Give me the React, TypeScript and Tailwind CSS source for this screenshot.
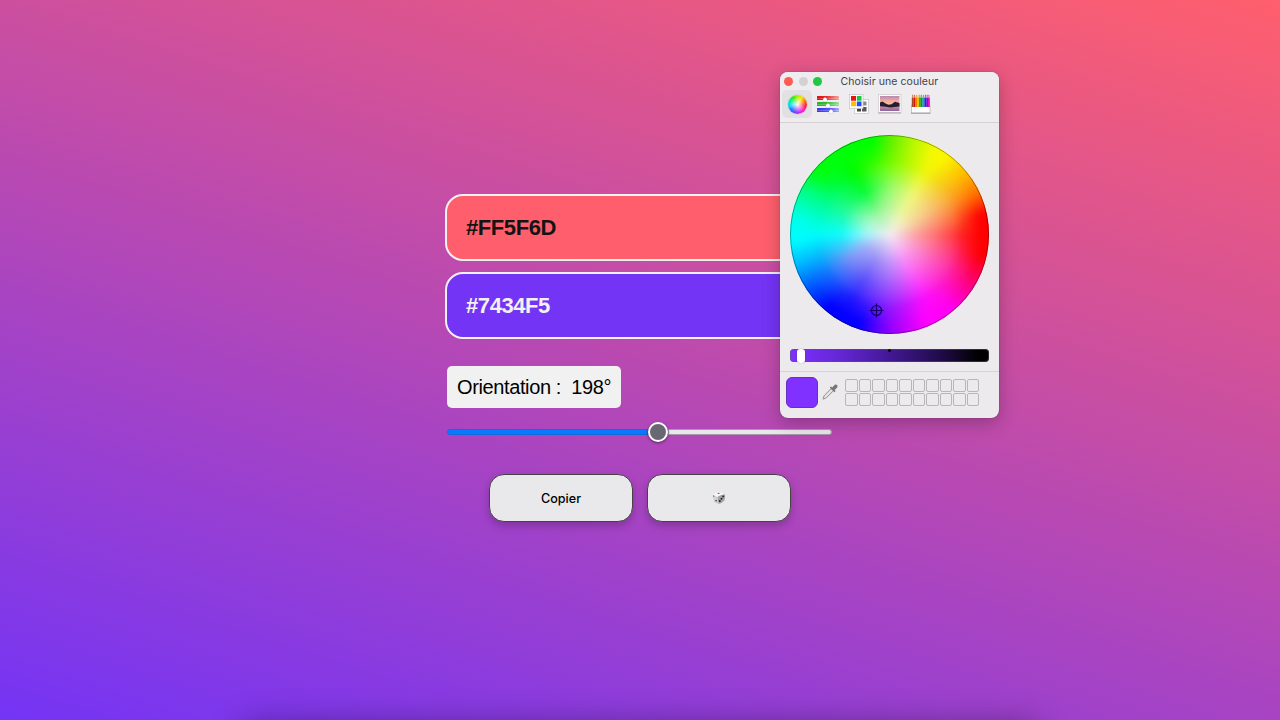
import React from "react";

type Ring = { colors: string[]; from: number; to: number };

// Hue samples clockwise from the top, one every 30 degrees, for each ring of the wheel.
const rings: Ring[] = [
  { from: 0, to: 25, colors: ["#bcf6a0", "#eef79c", "#f4dca0", "#fda4a4", "#fb9cd8", "#f898fa", "#c69afa", "#a098f7", "#a2acf8", "#94fafb", "#a0f9c4", "#90f798"] },
  { from: 25, to: 48, colors: ["#90fa68", "#f0f870", "#f8c074", "#fe6c6c", "#fd60bc", "#fb58fb", "#a460fc", "#6458fa", "#7894f8", "#10fcfc", "#28fb94", "#08fb38"] },
  { from: 48, to: 72, colors: ["#74fb00", "#f0f60c", "#fba830", "#ff2828", "#fe28a8", "#fe10fd", "#9020fe", "#2a20fd", "#1480fc", "#00fdfb", "#00fc80", "#00fb00"] },
];

const wheelEdge =
  "conic-gradient(#5cf000 0deg,#b8f800 15deg,#f4f800 27deg,#faf600 36deg,#ffb800 52deg,#ff7000 65deg,#ff0000 78deg,#ff0000 102deg,#ff0080 122deg,#ff00f0 140deg,#ff00ff 158deg,#9000ff 180deg,#0800ff 198deg,#0000ff 220deg,#0060ff 238deg,#00b8ff 252deg,#00fcff 266deg,#00ffe8 280deg,#00ff88 297deg,#00ff10 310deg,#00ff00 350deg,#5cf000 360deg)";

function ringStyle({ colors, from, to }: Ring): React.CSSProperties {
  const mask = `radial-gradient(circle closest-side, transparent ${from}%, #000 ${to}%)`;
  return {
    background: `conic-gradient(${[...colors, colors[0]].join(",")})`,
    maskImage: mask,
    WebkitMaskImage: mask,
  };
}

function ColorWheel() {
  const edgeMask = "radial-gradient(circle closest-side, transparent 68%, #000 92%)";
  return (
    <div className="relative ml-[10px] mt-[12px] size-[199px] overflow-hidden rounded-full" style={{ background: wheelEdge }}>
      <div className="absolute inset-0 bg-[#f3eef3] blur-[3px]">
        {rings.map((r) => (
          <div key={r.to} className="absolute inset-0" style={ringStyle(r)} />
        ))}
        <div className="absolute inset-0" style={{ background: wheelEdge, maskImage: edgeMask, WebkitMaskImage: edgeMask }} />
      </div>
      <div className="absolute inset-0 rounded-full border border-black/35" />
      <svg className="absolute left-[79px] top-[168px]" width="15" height="15" viewBox="0 0 15 15" fill="none" stroke="#16006b" strokeWidth="1.2">
        <circle cx="7.5" cy="7.5" r="5" />
        <path d="M7.5 .5v14M.5 7.5h14" />
      </svg>
    </div>
  );
}

function WheelIcon() {
  return (
    <div className="flex h-7 w-[30px] items-center justify-center rounded-[5px] bg-[#e3e0e4]">
      <div className="size-[19px] rounded-full bg-[radial-gradient(circle_closest-side,white_0%,transparent_85%),conic-gradient(#a8f000,#ffe000,#ff7000,#ff2040,#ff20b0,#e020ff,#7040ff,#2070ff,#00d8ff,#00f0a0,#20f000,#a8f000)] ring-1 ring-black/5" />
    </div>
  );
}

function SlidersIcon() {
  return (
    <svg width="22" height="20" viewBox="0 0 22 20">
      <defs>
        <linearGradient id="sr"><stop stopColor="#e00808" /><stop offset=".45" stopColor="#e83030" /><stop offset="1" stopColor="#f4a0a0" /></linearGradient>
        <linearGradient id="sg"><stop stopColor="#28b028" /><stop offset=".5" stopColor="#3dbf3d" /><stop offset="1" stopColor="#a0dca0" /></linearGradient>
        <linearGradient id="sb"><stop stopColor="#3434f0" /><stop offset=".6" stopColor="#5858f8" /><stop offset="1" stopColor="#a8acf8" /></linearGradient>
      </defs>
      <g transform="translate(0 2)">
        <rect y="0" width="22" height="4" rx=".6" fill="url(#sr)" />
        <rect y="6" width="22" height="4" rx=".6" fill="url(#sg)" />
        <rect y="12" width="22" height="4" rx=".6" fill="url(#sb)" />
        <path d="M0 2.5h22M0 8.5h22M0 14.5h22" stroke="#fff" strokeOpacity=".2" strokeWidth="1" />
        <g fill="#fff" stroke="#aaa" strokeWidth=".3">
          <path d="M8 1.2 10 3V5.4H6V3Z" />
          <path d="M11 7.2 13 9v2.4H9V9Z" />
          <path d="M14 13.2 16 15v2.4h-4V15Z" />
        </g>
      </g>
    </svg>
  );
}

function PalettesIcon() {
  return (
    <svg width="20" height="20" viewBox="0 0 20 20">
      <rect x="5.5" y="5.5" width="14" height="14" fill="#fff" stroke="#c6c3c6" strokeWidth=".7" />
      <path fill="#444" d="M8 13h4v4.5H8z" />
      <path fill="#888" d="M13.5 7.5h4v4h-4z" />
      <path fill="#555" d="M13 13h4.5v4.5H13z" />
      <rect x=".5" y=".5" width="13.5" height="14" fill="#fff" stroke="#c6c3c6" strokeWidth=".7" />
      <path fill="#f01010" d="M2 2h5v4.8H2z" />
      <path fill="#18c83c" d="M7.8 2h4.7v4.8H7.8z" />
      <path fill="#ffc000" d="M2 7.6h5v4.7H2z" />
      <path fill="#2848ff" d="M7.8 7.6h4.7v4.7H7.8z" />
    </svg>
  );
}

function ImageIcon() {
  return (
    <svg width="24" height="20" viewBox="0 0 24 20">
      <defs>
        <linearGradient id="sky" x2="0" y2="1"><stop stopColor="#b58ab0" /><stop offset=".5" stopColor="#f0a8a0" /><stop offset="1" stopColor="#ffc778" /></linearGradient>
        <linearGradient id="sea" x2="0" y2="1"><stop stopColor="#e59b94" /><stop offset="1" stopColor="#8a62a2" /></linearGradient>
      </defs>
      <rect x=".5" y=".5" width="22.5" height="18" fill="#fff" stroke="#ccc8cc" strokeWidth=".7" />
      <path d="M0 19h23" stroke="#aaa6aa" strokeWidth="1" />
      <rect x="2" y="2" width="19.5" height="9" fill="url(#sky)" />
      <rect x="2" y="11" width="19.5" height="6" fill="url(#sea)" />
      <path fill="#241d38" d="M2 8.5 4.5 7.5l3 2 3 1.2 3-.5 3.5-2.4 4.5 1.2v3.5l-5 .5-4 .4-5-.7-5.5-.5z" />
    </svg>
  );
}

const pencils = ["#a04a20", "#e01010", "#f08000", "#d8c800", "#38a818", "#109048", "#10a0c8", "#1030e0", "#7018e0", "#e010c0"];

function PencilsIcon() {
  return (
    <svg width="20" height="20" viewBox="0 0 20 20">
      <rect x=".5" y="11" width="18.5" height="8" fill="#fff" stroke="#b5b2b5" strokeWidth=".7" />
      {pencils.map((c, i) => (
        <g key={c} transform={`translate(${0.8 + i * 1.8} 0)`}>
          <path d="M0 4 .9 1 1.8 4z" fill="#e0bc90" />
          <path d="M.3 2.4 .9.2 1.5 2.4z" fill={c} />
          <rect y="3.6" width="1.85" height="9.4" fill={c} />
        </g>
      ))}
      <path d="M0 19.2h19.5" stroke="#969396" strokeWidth=".9" />
    </svg>
  );
}

function Eyedropper() {
  return (
    <svg width="16" height="16" viewBox="0 0 16 16">
      <path d="M9.2 4.6 2.4 11.4 .9 14.8l.4.4 3.3-1.6 6.8-6.8z" fill="#e4e3e4" stroke="#85838a" strokeWidth=".9" />
      <path d="M7.8 3.5 9 2.4l1.2 1.1L12.1 1.4C13 .4 14.2.3 15 1.1s.7 2-.3 2.9l-2.1 1.9 1.1 1.2-1.2 1.2z" fill="#77757a" />
    </svg>
  );
}

function Dice() {
  return (
    <svg width="14" height="14" viewBox="0 0 14 14">
      <path d="M.9 4 5.6 5.8 6.4 12.8 2.4 11.2Q1 9 .9 4z" fill="#cfcfd0" />
      <path d="M.9 3.8Q3.5 1.6 6.5 1.2 10 1.4 13 3.4L5.8 5.9z" fill="#f7f6f6" />
      <path d="M5.7 5.8Q9 3.6 12.9 3.3 13.6 6.5 12.4 9.6 10 12.3 6.6 12.9 5.6 9 5.7 5.8z" fill="#a2a2a4" />
      <ellipse cx="6.6" cy="2.3" rx="1.2" ry=".6" fill="#f03528" />
      <g fill="#1c1c1c">
        <circle cx="11.2" cy="5.4" r=".9" /><circle cx="9.5" cy="7.7" r=".95" /><circle cx="7.8" cy="10" r=".95" />
        <circle cx="1.7" cy="5" r=".6" /><circle cx="4.1" cy="9.8" r=".7" />
      </g>
    </svg>
  );
}

function ColorPicker() {
  return (
    <section className="absolute left-[780px] top-[72px] h-[346px] w-[219px] overflow-hidden rounded-[8px] bg-[#eceaed] shadow-[0_0_1px_rgba(0,0,0,0.5),0_5px_18px_rgba(0,0,0,0.25)]">
      <header className="h-[51px] border-b border-[#d5d2d5] bg-[#efecef]">
        <div className="flex h-[18px] items-center">
          <div className="ml-[4px] flex gap-[5.5px]">
            <i className="size-[9px] rounded-full bg-[#ff5b54]" />
            <i className="size-[9px] rounded-full bg-[#d4d1d4]" />
            <i className="size-[9px] rounded-full bg-[#20c840]" />
          </div>
          <h1 className="ml-[18.5px] whitespace-nowrap pt-[2px] font-['Inter',sans-serif] text-[10.5px] leading-[18px] tracking-[0.07px] text-[#454246]">Choisir une couleur</h1>
        </div>
        <nav className="flex h-7 pl-[2px]">
          <WheelIcon />
          <div className="flex w-8 items-center justify-center"><SlidersIcon /></div>
          <div className="flex w-[30px] items-center justify-center"><PalettesIcon /></div>
          <div className="flex w-8 items-center justify-center"><ImageIcon /></div>
          <div className="flex w-[30px] items-center justify-center"><PencilsIcon /></div>
        </nav>
      </header>
      <ColorWheel />
      <div className="relative ml-[10px] mt-[15px] h-[13px] w-[199px] rounded-[4px] bg-[linear-gradient(90deg,#7e30ff,#6427d4_25%,#421895_50%,#210c4b_75%,#000_95%)] shadow-[inset_0_0_0_1px_rgba(90,90,90,0.5)]">
        <i className="absolute left-[7px] top-0 h-[14px] w-[8px] rounded-[3px] bg-white shadow-[0_0_1px_rgba(0,0,0,0.5)]" />
        <i className="absolute left-[98px] top-0 size-[3px] rounded-full bg-[#080014]" />
      </div>
      <footer className="mt-[9px] flex border-t border-[#d7d4d7] pl-[6px] pt-[5px]">
        <div className="h-[31px] w-8 rounded-[6px] border border-[#6730bd] bg-[#8030ff]" />
        <div className="ml-[4px] mt-[7px]"><Eyedropper /></div>
        <div className="ml-[7px] mt-[2px] grid h-[27px] grid-cols-[repeat(10,12.5px)] grid-rows-[13px_13px] gap-px">
          {Array.from({ length: 20 }, (_, i) => (
            <i key={i} className="rounded-[2px] border border-[#b9b6b9]" />
          ))}
        </div>
      </footer>
    </section>
  );
}

export default function App() {
  return (
    <div className="relative h-[720px] w-[1280px] overflow-hidden bg-[linear-gradient(198deg,#ff5f6d,#7434f5)] font-['Liberation_Sans',Arial,sans-serif]">
      <main className="mx-auto flex w-[390px] flex-col pt-[194px]">
        <div className="flex h-[67px] items-center rounded-[18px] border-2 border-[#f1f1f1] bg-[#ff5f6d] pl-[19px] text-[22px] font-bold tracking-[-0.42px] text-[#141414]">#FF5F6D</div>
        <div className="mt-[11px] flex h-[67px] items-center rounded-[18px] border-2 border-[#f1f1f1] bg-[#7434f5] pl-[19px] text-[22px] font-bold tracking-[-0.42px] text-[#f1f1f1]">#7434F5</div>
        <div className="ml-[2px] mt-[27px] flex h-[42px] w-[174px] items-center whitespace-pre rounded-[5px] bg-[#f1f1f1] pl-[10px] text-[20px] tracking-[-0.38px] text-black">Orientation :  198°</div>
        <div className="ml-[2px] mt-[14px] flex h-5 w-[385px] items-center">
          <div className="h-[6px] w-[201px] rounded-l-full border border-[#126bd8] bg-[#087aff]" />
          <div className="z-10 size-5 shrink-0 rounded-full border-2 border-white bg-[#686873] shadow-[0_1px_3px_rgba(0,0,0,0.5)]" />
          <div className="h-[6px] flex-1 rounded-r-full border border-[#a797a8] bg-[#e8e8ea]" />
        </div>
        <div className="mt-[32px] flex justify-center gap-[14px]">
          <button className="h-12 w-[144px] rounded-[15px] border border-[#484148] bg-[#e9e9eb] pt-[3px] font-['Inter',sans-serif] text-[12.6px] font-medium text-black shadow-[0_4px_9px_rgba(0,0,0,0.22)]">Copier</button>
          <button className="flex h-12 w-[144px] items-center justify-center rounded-[15px] border border-[#484148] bg-[#e9e9eb] shadow-[0_4px_9px_rgba(0,0,0,0.22)]"><Dice /></button>
        </div>
      </main>
      <ColorPicker />
      <div className="absolute left-[240px] top-[724px] h-10 w-[800px] rounded-2xl shadow-[0_0_32px_rgba(0,0,0,0.35)]" />
    </div>
  );
}
